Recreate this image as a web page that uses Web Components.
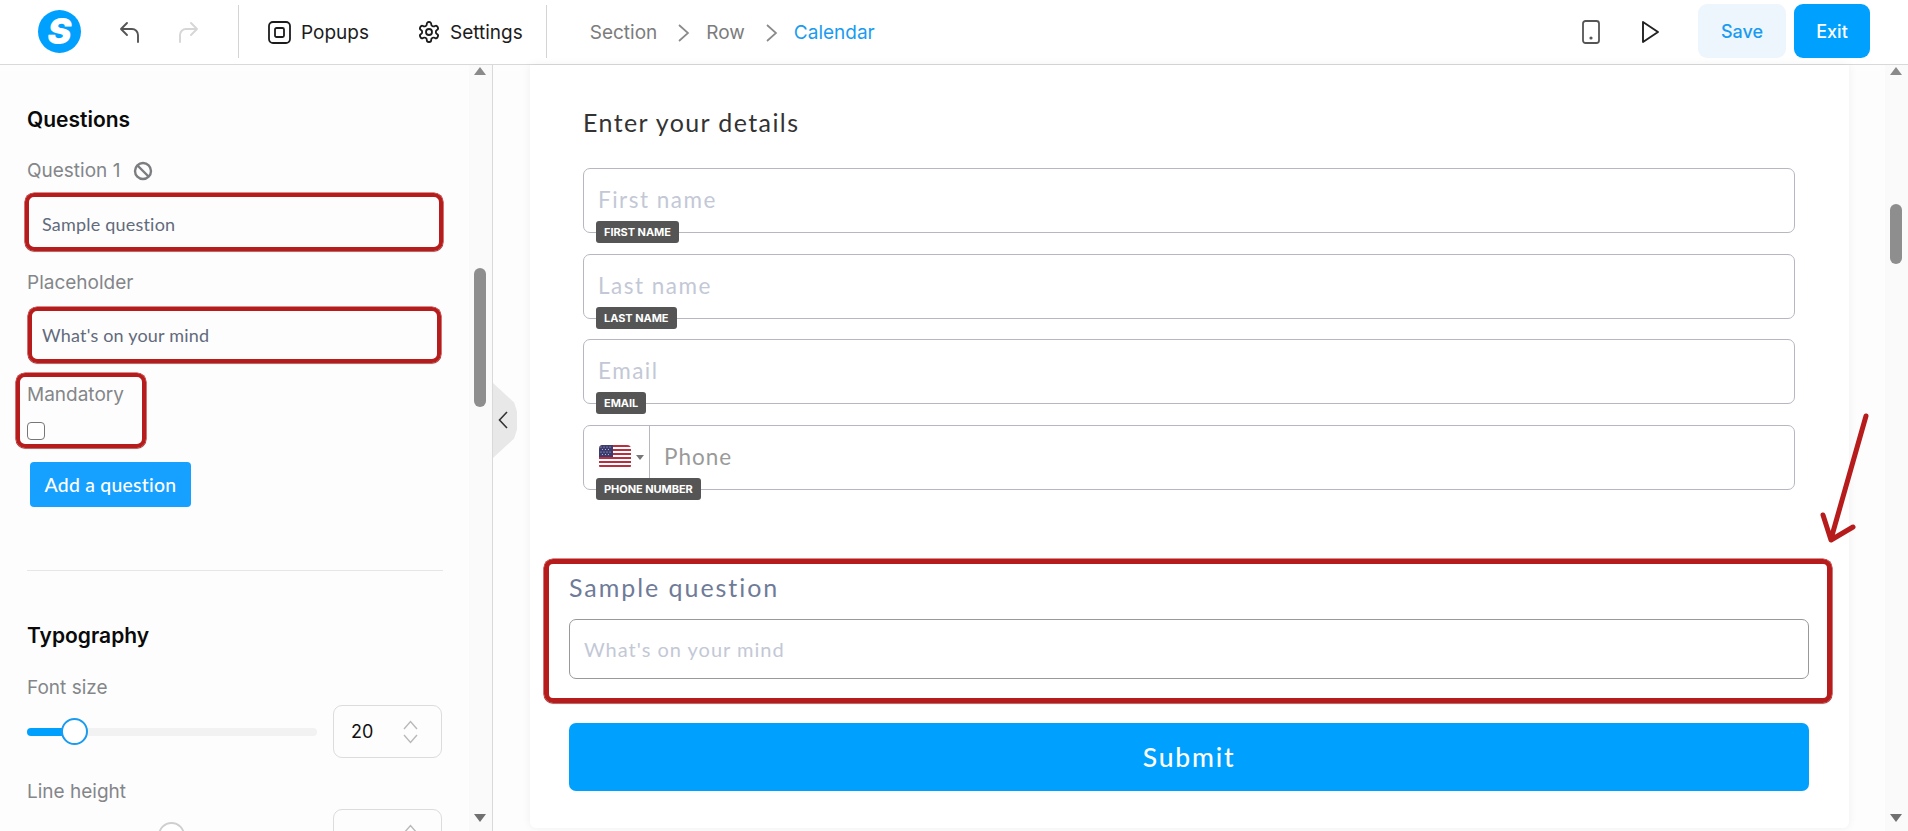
<!DOCTYPE html>
<html>
<head>
<meta charset="utf-8">
<title>Calendar editor</title>
<style>
html,body{margin:0;height:100%;overflow:hidden;background:#fff;font-family:Inter,"Liberation Sans",sans-serif}
</style>
</head>
<body>
<editor-app></editor-app>
<script>
// every element is just a template in a shadow root, so one small helper does it
function def(name, html){
  customElements.define(name, class extends HTMLElement {
    constructor(){ super()
      this.attachShadow({mode:'open'}).innerHTML = html
    }
  })
}
const RED = '#b71c1c', BLUE = '#00a0ff', LINK = '#1a9bf0'

def('top-bar', `
<style>
:host{display:flex;align-items:center;height:65px;box-sizing:border-box;border-bottom:1px solid #d9d9d9;padding:0 38px;color:#1c1c1c;font-size:19px;flex:none}
.logo{width:43px;height:43px;border-radius:50%;background:${BLUE};color:#fff;font:italic 900 36px/43px Inter,sans-serif;text-align:center;margin-top:-2px}
svg{display:block;fill:none;stroke:currentColor;stroke-linecap:round;stroke-linejoin:round}
.undo{margin-left:37px;color:#555}
.redo{margin-left:34px;color:#d6d6d6}
.sep{width:1px;height:53px;background:#d4d4d4;margin-top:-2px}
.tool{display:flex;align-items:center;gap:10px}
.right{margin-left:auto;display:flex;align-items:center}
.btn{height:54px;border-radius:9px;display:flex;align-items:center;justify-content:center;font-weight:500;font-size:18px;margin-top:-2px;box-sizing:border-box}
.save{width:88px;background:#eef6fd;color:${LINK};margin-left:38px}
.exit{width:76px;background:${BLUE};color:#fff;margin-left:8px}
</style>
<div class="logo">S</div>
<svg class="undo" width="24" height="24" viewBox="0 0 24 24" stroke-width="1.9"><path d="M9 3 L3 9 L9 15 M3 9 H14 a6 6 0 0 1 6 6 v7"/></svg>
<svg class="redo" width="24" height="24" viewBox="0 0 24 24" stroke-width="1.9"><path d="M15 3 L21 9 L15 15 M21 9 H10 a6 6 0 0 0 -6 6 v7"/></svg>
<div class="sep" style="margin-left:38px"></div>
<div class="tool" style="margin-left:29px"><svg width="23" height="23" viewBox="0 0 23 23" stroke-width="1.8"><rect x="1" y="1" width="21" height="21" rx="4"/><rect x="7" y="7" width="9" height="9" rx="1.5"/></svg>Popups</div>
<div class="tool" style="margin-left:48px;gap:9px"><svg width="24" height="24" viewBox="0 0 24 24" stroke-width="1.8"><path d="M12.22 2h-.44a2 2 0 0 0-2 2v.18a2 2 0 0 1-1 1.73l-.43.25a2 2 0 0 1-2 0l-.15-.08a2 2 0 0 0-2.73.73l-.22.38a2 2 0 0 0 .73 2.73l.15.1a2 2 0 0 1 1 1.72v.51a2 2 0 0 1-1 1.74l-.15.09a2 2 0 0 0-.73 2.73l.22.38a2 2 0 0 0 2.73.73l.15-.08a2 2 0 0 1 2 0l.43.25a2 2 0 0 1 1 1.73V20a2 2 0 0 0 2 2h.44a2 2 0 0 0 2-2v-.18a2 2 0 0 1 1-1.73l.43-.25a2 2 0 0 1 2 0l.15.08a2 2 0 0 0 2.73-.73l.22-.39a2 2 0 0 0-.73-2.73l-.15-.08a2 2 0 0 1-1-1.74v-.5a2 2 0 0 1 1-1.74l.15-.09a2 2 0 0 0 .73-2.73l-.22-.38a2 2 0 0 0-2.73-.73l-.15.08a2 2 0 0 1-2 0l-.43-.25a2 2 0 0 1-1-1.73V4a2 2 0 0 0-2-2z"/><circle cx="12" cy="12" r="3"/></svg>Settings</div>
<div class="sep" style="margin-left:23px"></div>
<bread-crumbs style="margin-left:43px"></bread-crumbs>
<div class="right">
  <svg style="color:#555" width="18" height="24" viewBox="0 0 18 24" stroke-width="1.8"><rect x="1" y="1" width="16" height="22" rx="2.5"/><circle cx="9" cy="18" r=".7" fill="currentColor"/></svg>
  <svg style="margin-left:41px;color:#222" width="19" height="24" viewBox="0 0 19 24" stroke-width="1.9"><path d="M2 2 L17 12 L2 22 Z"/></svg>
  <div class="btn save">Save</div>
  <div class="btn exit">Exit</div>
</div>`)

def('bread-crumbs', `
<style>
:host{display:flex;align-items:center;color:#7c7c7c;font-size:19px;margin-top:1px}
svg{margin:0 16px 0 20px;display:block}
b{font-weight:400;color:${LINK}}
</style>
Section
<svg width="13" height="20" viewBox="0 0 13 20" fill="none" stroke="#8a8a8a" stroke-width="1.7"><path d="M2 2 L11 10 L2 18"/></svg>
Row
<svg width="13" height="20" viewBox="0 0 13 20" fill="none" stroke="#8a8a8a" stroke-width="1.7"><path d="M2 2 L11 10 L2 18"/></svg>
<b>Calendar</b>`)

// fake browser scrollbar, thumb placed by css vars from outside
def('scroll-rail', `
<style>
:host{display:block;width:23px;flex:none;background:#fafafa;position:relative}
.up,.down{position:absolute;left:var(--x,5px);width:0;height:0;border:6px solid transparent}
.up{top:2px;border-top:0;border-bottom:8px solid #8a8a8a}
.down{bottom:9px;border-bottom:0;border-top:8px solid #707070}
.thumb{position:absolute;left:var(--x,5px);width:12px;top:var(--top);height:var(--h);background:#8e8e8e;border-radius:6px}
</style>
<div class="up"></div><div class="thumb"></div><div class="down"></div>`)

def('red-box', `
<style>
:host{display:block;box-sizing:border-box;border:4px solid ${RED};border-radius:9px;box-shadow:0 0 0 .6px ${RED},0 1px 1px rgba(0,0,0,.3)}
</style>
<slot></slot>`)

def('range-row', `
<style>
:host{display:flex;align-items:center;width:415px}
.track{width:290px;height:8px;border-radius:4px;background:#f2f2f2;position:relative;flex:none}
.fill{position:absolute;left:0;top:0;bottom:0;width:var(--pos);background:${BLUE};border-radius:4px}
.knob{position:absolute;left:var(--pos);top:-10px;margin-left:-13px;width:27px;height:27px;box-sizing:border-box;background:#fff;border:2.5px solid var(--knob,${LINK});border-radius:50%}
.num{margin-left:16px;width:109px;height:53px;box-sizing:border-box;border:1px solid #dcdcdc;border-radius:9px;display:flex;align-items:center;padding-left:17px;font-size:18px;color:#111;position:relative}
svg{position:absolute;right:22px;top:14px}
</style>
<div class="track"><div class="fill"></div><div class="knob"></div></div>
<div class="num"><slot></slot><svg width="17" height="24" viewBox="0 0 17 24" fill="none" stroke="#b9b9b9" stroke-width="1.4"><path d="M2 9 L8.5 1.5 L15 9 M2 15 L8.5 22.5 L15 15"/></svg></div>`)

def('side-panel', `
<style>
:host{display:flex;width:493px;flex:none;box-sizing:border-box;border-right:1px solid #d9d9d9;height:100%;overflow:hidden;position:relative}
.body{flex:1;padding:43px 0 0 27px;min-width:0;overflow:hidden}
h3{margin:0;font-size:21px;line-height:24px;font-weight:600;color:#0a0a0a}
.lbl{font-size:19px;line-height:22px;color:#84868a;display:flex;align-items:center;gap:10px}
.val{font:400 18px/1 Lato,sans-serif;color:#626a7c;letter-spacing:.2px}
input{display:block;width:18px;height:18px;margin:0;appearance:none;border:1px solid #777;border-radius:4px;background:#fff}
.add{margin:14px 0 0 3px;width:161px;height:45px;border-radius:4px;background:#16a0ff;color:#fff;font:500 19.4px/45px Lato,sans-serif;text-align:center;letter-spacing:.25px}
hr{border:0;height:1px;background:#e6e6e6;margin:63px 0 0;width:416px}
</style>
<div class="body">
  <h3>Questions</h3>
  <div class="lbl" style="margin-top:28px">Question 1
    <svg width="20" height="20" viewBox="0 0 20 20" fill="none" stroke="#7b7d80" stroke-width="2.4" style="margin-left:3px"><circle cx="10" cy="10" r="8"/><path d="M4.5 4.5 L15.5 15.5"/></svg>
  </div>
  <red-box style="margin:11px 0 0 -2px;width:418px;height:58px;padding:18px 0 0 13px"><div class="val">Sample question</div></red-box>
  <div class="lbl" style="margin-top:21px">Placeholder</div>
  <red-box style="margin:13px 0 0 1px;width:413px;height:56px;padding:15px 0 0 10px"><div class="val">What's on your mind</div></red-box>
  <red-box style="margin:10px 0 0 -11px;width:130px;height:75px;padding:7px 0 0 7px">
    <div class="lbl">Mandatory</div><input type="checkbox" style="margin-top:16px">
  </red-box>
  <div class="add">Add a question</div>
  <hr>
  <h3 style="margin-top:53px">Typography</h3>
  <div class="lbl" style="margin-top:29px">Font size</div>
  <range-row style="margin-top:6px;--pos:47px">20</range-row>
  <div class="lbl" style="margin-top:23px">Line height</div>
  <range-row style="margin-top:6px;--pos:144px;--knob:#cfcfcf"></range-row>
</div>
<scroll-rail style="--top:203px;--h:139px"></scroll-rail>`)

def('form-input', `
<style>
:host{display:flex;align-items:center;position:relative;height:65px;box-sizing:border-box;border:1px solid #b5b8c0;border-radius:7px;padding:0 0 2px 14px;font:400 22.5px Lato,sans-serif;color:#c3c8d6;letter-spacing:1.5px}
.tag{position:absolute;left:12px;top:52px;height:22px;padding:0 8px;background:#555;color:#fff;border-radius:3px;font:700 11px/22px Inter,sans-serif;letter-spacing:-.05px;white-space:nowrap}
</style>
<slot></slot><span class="tag"><slot name="tag"></slot></span>`)

def('phone-input', `
<style>
:host{display:flex;align-items:center;position:relative;height:65px;box-sizing:border-box;border:1px solid #b5b8c0;border-radius:7px;font:400 22.5px Lato,sans-serif;color:#9a9a9a;letter-spacing:1px}
.flag{width:66px;height:100%;flex:none;box-sizing:border-box;border-right:1px solid #b5b8c0;display:flex;align-items:center;padding-left:15px;gap:5px}
.caret{width:0;height:0;border:4.5px solid transparent;border-top:5px solid #777;border-bottom:0}
.txt{margin-left:14px;margin-top:-2px}
.tag{position:absolute;left:12px;top:52px;height:22px;padding:0 8px;background:#555;color:#fff;border-radius:3px;font:700 11px/22px Inter,sans-serif;letter-spacing:-.05px;white-space:nowrap}
</style>
<div class="flag">
  <svg width="32" height="24" viewBox="0 0 32 24" style="display:block;border-radius:4px"><rect width="32" height="24" fill="#fff"/><g fill="#b8303f"><rect y="0" width="32" height="2"/><rect y="4" width="32" height="2"/><rect y="8" width="32" height="2"/><rect y="12" width="32" height="2"/><rect y="16" width="32" height="2"/><rect y="20" width="32" height="2"/></g><rect width="14" height="12" fill="#3c3b6e"/><g fill="#c6c6e0"><circle cx="2" cy="2" r=".6"/><circle cx="5" cy="2" r=".6"/><circle cx="8" cy="2" r=".6"/><circle cx="11" cy="2" r=".6"/><circle cx="3.5" cy="4.5" r=".6"/><circle cx="6.5" cy="4.5" r=".6"/><circle cx="9.5" cy="4.5" r=".6"/><circle cx="2" cy="7" r=".6"/><circle cx="5" cy="7" r=".6"/><circle cx="8" cy="7" r=".6"/><circle cx="11" cy="7" r=".6"/><circle cx="3.5" cy="9.5" r=".6"/><circle cx="6.5" cy="9.5" r=".6"/><circle cx="9.5" cy="9.5" r=".6"/></g></svg>
  <div class="caret"></div>
</div>
<span class="txt">Phone</span>
<span class="tag">PHONE NUMBER</span>`)

def('form-card', `
<style>
:host{display:block;width:1319px;height:763px;margin-left:37px;box-sizing:border-box;background:#fff;box-shadow:0 0 10px rgba(0,0,0,.06);padding:42px 0 0 53px;border-radius:0 0 6px 6px}
h2{margin:0;font:400 25px/30px Lato,sans-serif;color:#333;letter-spacing:1.4px}
.list{display:grid;gap:20.67px;width:1212px;margin-top:31px}
.q{margin:69px 0 0 -39px;width:1288px;height:144px;border-width:5px;padding:8px 0 0 20px}
.qt{font:400 25px/30px Lato,sans-serif;color:#6f7b98;letter-spacing:1.95px}
.qi{margin-top:17px;width:1240px;height:60px;box-sizing:border-box;border:1px solid #999;border-radius:7px;display:flex;align-items:center;padding-left:14px;font:400 20px Lato,sans-serif;color:#c3c8d6;letter-spacing:1px}
.sub{margin:20px 0 0 -14px;width:1240px;height:68px;background:${BLUE};border-radius:7px;color:#fff;font:500 26.5px/68px Lato,sans-serif;text-align:center;letter-spacing:1.8px}
</style>
<h2>Enter your details</h2>
<div class="list">
  <form-input>First name<span slot="tag">FIRST NAME</span></form-input>
  <form-input>Last name<span slot="tag">LAST NAME</span></form-input>
  <form-input>Email<span slot="tag">EMAIL</span></form-input>
  <phone-input></phone-input>
</div>
<red-box class="q">
  <div class="qt">Sample question</div>
  <div class="qi">What's on your mind</div>
</red-box>
<div class="sub">Submit</div>`)

def('editor-app', `
<style>
:host{display:flex;flex-direction:column;height:100vh;overflow:hidden}
main{flex:1;display:flex;min-height:0;position:relative;background:#fdfdfd}
.canvas{flex:1;min-width:0}
.tab{position:absolute;left:493px;top:318px;width:24px;height:75px;background:#e8e8e8;clip-path:polygon(0 0,88% 26%,100% 38%,100% 62%,88% 74%,0 100%);display:flex;align-items:center;padding:0 0 2px 5px;box-sizing:border-box}
.arrow{position:absolute;left:1815px;top:345px}
</style>
<top-bar></top-bar>
<main>
  <side-panel></side-panel>
  <div class="canvas"><form-card></form-card></div>
  <scroll-rail style="--top:139px;--h:60px"></scroll-rail>
  <div class="tab"><svg width="10" height="18" viewBox="0 0 10 18" fill="none" stroke="#333" stroke-width="1.6"><path d="M9 1 L1.5 9 L9 17"/></svg></div>
  <svg class="arrow" width="60" height="140" viewBox="0 0 60 140" fill="none" stroke="${RED}" stroke-width="5" stroke-linecap="round" stroke-linejoin="round"><path d="M51 6 L16 129 M8 105 L16 130 L38 117"/></svg>
</main>`)
</script>
</body>
</html>
